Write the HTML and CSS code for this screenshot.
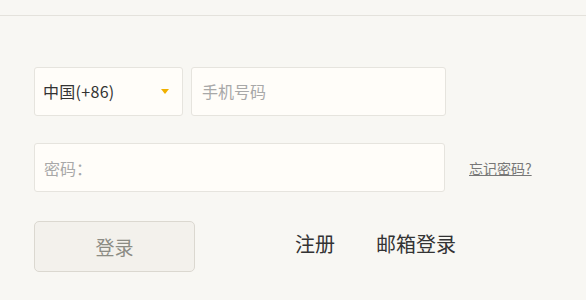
FILE: index.html
```html
<!DOCTYPE html>
<html lang="zh">
<head>
<meta charset="utf-8">
<link rel="stylesheet" href="styles.css">
</head>
<body>
<div class="header"></div>
<div class="form">
  <div class="row">
    <div class="field select">
      <span class="select-text">中国(+86)</span>
      <span class="arrow"></span>
    </div>
    <div class="field phone"><span class="ph">手机号码</span></div>
  </div>
  <div class="row row2">
    <div class="field pwd"><span class="ph">密码：</span></div>
    <a class="forgot">忘记密码?</a>
  </div>
  <div class="row row3">
    <div class="btn">登录</div>
    <a class="link reg">注册</a>
    <a class="link mail">邮箱登录</a>
  </div>
</div>
</body>
</html>
```
FILE: styles.css
```css
html, body {
  margin: 0;
  padding: 0;
  background: #f8f7f3;
  font-family: "Noto Sans CJK SC", "Noto Sans", sans-serif;
}
.header {
  height: 15px;
  border-bottom: 1px solid #e4e2dc;
}
.form {
  padding: 51px 0 0 34px;
}
.row {
  display: flex;
  align-items: center;
}
.field {
  box-sizing: border-box;
  height: 49px;
  background: #fffdf9;
  border: 1px solid #e6e4de;
  border-radius: 3px;
  display: flex;
  align-items: center;
}
.select {
  width: 149px;
  padding: 0 12px 0 8px;
  justify-content: space-between;
  margin-right: 8px;
}
.select-text {
  font-size: 16px;
  color: #333;
  letter-spacing: 0.3px;
  margin-top: -2px;
}
.arrow {
  width: 0;
  height: 0;
  border-left: 4px solid transparent;
  border-right: 4px solid transparent;
  border-top: 5px solid #f0b000;
  margin-right: 1px;
}
.phone {
  width: 255px;
  padding-left: 10px;
}
.phone .ph {
  margin-top: -2px;
}
.ph {
  font-size: 16px;
  color: #a8a8a8;
}
.row2 {
  margin-top: 27px;
}
.pwd {
  width: 411px;
  padding-left: 9px;
}
.forgot {
  margin-left: 24px;
  font-size: 14px;
  color: #777;
  text-decoration: underline;
}
.row3 {
  margin-top: 29px;
}
.btn {
  box-sizing: border-box;
  width: 161px;
  height: 51px;
  background: #f3f1ec;
  border: 1px solid #dbd8d0;
  border-radius: 5px;
  display: flex;
  align-items: center;
  justify-content: center;
  font-size: 19px;
  color: #8c8c84;
}
.link {
  font-size: 20px;
  color: #333;
  margin-top: -6px;
}
.reg {
  margin-left: 100px;
}
.mail {
  margin-left: 41px;
}
```
